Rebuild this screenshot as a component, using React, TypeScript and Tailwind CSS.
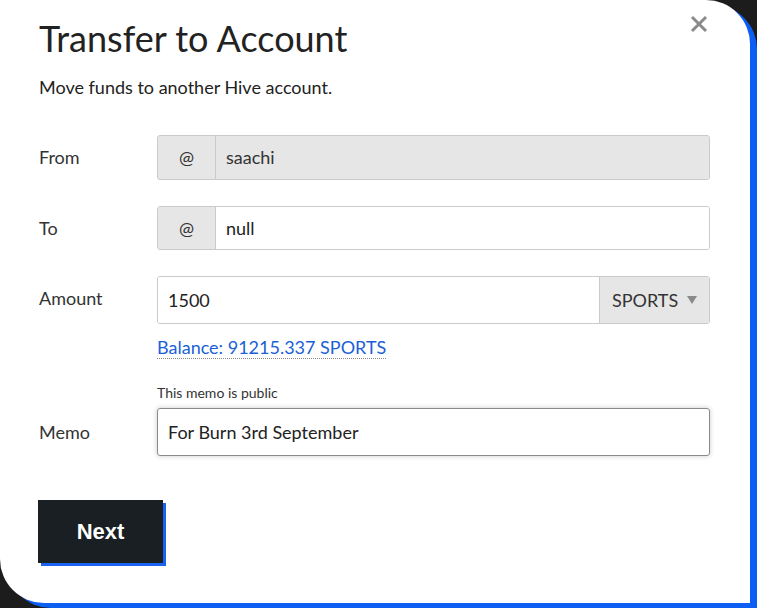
import { useState } from "react";

const font = { fontFamily: "Lato, 'Noto Sans', sans-serif" };

export default function App() {
  const [to, setTo] = useState("null");
  const [amount, setAmount] = useState("1500");
  const [memo, setMemo] = useState("For Burn 3rd September");

  return (
    <div className="w-[757px] h-[608px] bg-[#1c1c1c] overflow-hidden">
      <div
        className="relative w-[750px] h-[603px] bg-white rounded-tr-[44px] rounded-bl-[44px] shadow-[7px_5px_0_#0d5ef2] pl-[39px] pr-[40px] pt-[16px] text-[#0a0a0a]"
        style={font}
      >
        {/* Close */}
        <button className="absolute right-[42px] top-[15px] text-[#8a8a8a]">
          <svg width="18" height="18" viewBox="0 0 18 18">
            <path d="M2 2L16 16M16 2L2 16" stroke="currentColor" strokeWidth="3" />
          </svg>
        </button>

        <h1 className="text-[36px] leading-[44px] text-[#222]">Transfer to Account</h1>
        <p className="mt-[15px] text-[18px] leading-[24px] text-[#222]">
          Move funds to another Hive account.
        </p>

        {/* From */}
        <div className="mt-[36px] flex items-center">
          <label className="w-[118px] text-[18px] text-[#333]">From</label>
          <div className="flex flex-1 h-[45px] border border-[#cacaca] rounded-[3px] overflow-hidden bg-[#e6e6e6]">
            <span className="w-[58px] flex items-center justify-center text-[18px] text-[#333] border-r border-[#cacaca]">
              @
            </span>
            <input
              disabled
              value="saachi"
              className="flex-1 px-[10px] text-[18px] bg-[#e6e6e6] text-[#333] outline-none"
              style={font}
            />
          </div>
        </div>

        {/* To */}
        <div className="mt-[26px] flex items-center">
          <label className="w-[118px] text-[18px] text-[#333]">To</label>
          <div className="flex flex-1 h-[44px] border border-[#cacaca] rounded-[3px] overflow-hidden">
            <span className="w-[58px] flex items-center justify-center text-[18px] text-[#333] bg-[#e6e6e6] border-r border-[#cacaca]">
              @
            </span>
            <input
              value={to}
              onChange={(e) => setTo(e.target.value)}
              className="flex-1 px-[10px] text-[18px] bg-white text-[#222] outline-none"
              style={font}
            />
          </div>
        </div>

        {/* Amount */}
        <div className="mt-[26px] flex">
          <label className="w-[118px] pt-[9px] text-[18px] text-[#333]">Amount</label>
          <div className="flex-1">
            <div className="flex h-[48px] border border-[#cacaca] rounded-[3px] overflow-hidden">
              <input
                value={amount}
                onChange={(e) => setAmount(e.target.value)}
                className="flex-1 px-[10px] text-[18px] bg-white text-[#222] outline-none"
                style={font}
              />
              <div className="w-[110px] flex items-center justify-between pl-[12px] pr-[12px] bg-[#e6e6e6] border-l border-[#cacaca] text-[18px] text-[#333]">
                SPORTS
                <svg width="10" height="8" viewBox="0 0 10 8">
                  <path d="M0 0H10L5 8Z" fill="#8a8a8a" />
                </svg>
              </div>
            </div>
            <a className="inline-block mt-[12px] text-[18px] leading-[22px] text-[#1a5fd6] border-b border-dotted border-[#8a8a8a] cursor-pointer">
              Balance: 91215.337 SPORTS
            </a>
          </div>
        </div>

        {/* Memo */}
        <div className="mt-[24px] flex">
          <label className="w-[118px] pt-[35px] text-[18px] text-[#333]">Memo</label>
          <div className="flex-1">
            <p className="text-[14px] leading-[18px] text-[#333]">This memo is public</p>
            <input
              value={memo}
              onChange={(e) => setMemo(e.target.value)}
              className="mt-[6px] w-full h-[48px] px-[10px] text-[18px] border border-[#8a8a8a] rounded-[3px] shadow-[0_0_5px_#cacaca] outline-none text-[#222]"
              style={font}
              autoFocus
            />
          </div>
        </div>

        <button
          className="mt-[44px] -ml-px w-[125px] h-[63px] bg-[#1a1f24] text-white text-[22px] font-bold shadow-[3px_3px_0_#1a62f0]"
          style={{ fontFamily: "'Liberation Sans', Arial, sans-serif" }}
        >
          Next
        </button>
      </div>
    </div>
  );
}
